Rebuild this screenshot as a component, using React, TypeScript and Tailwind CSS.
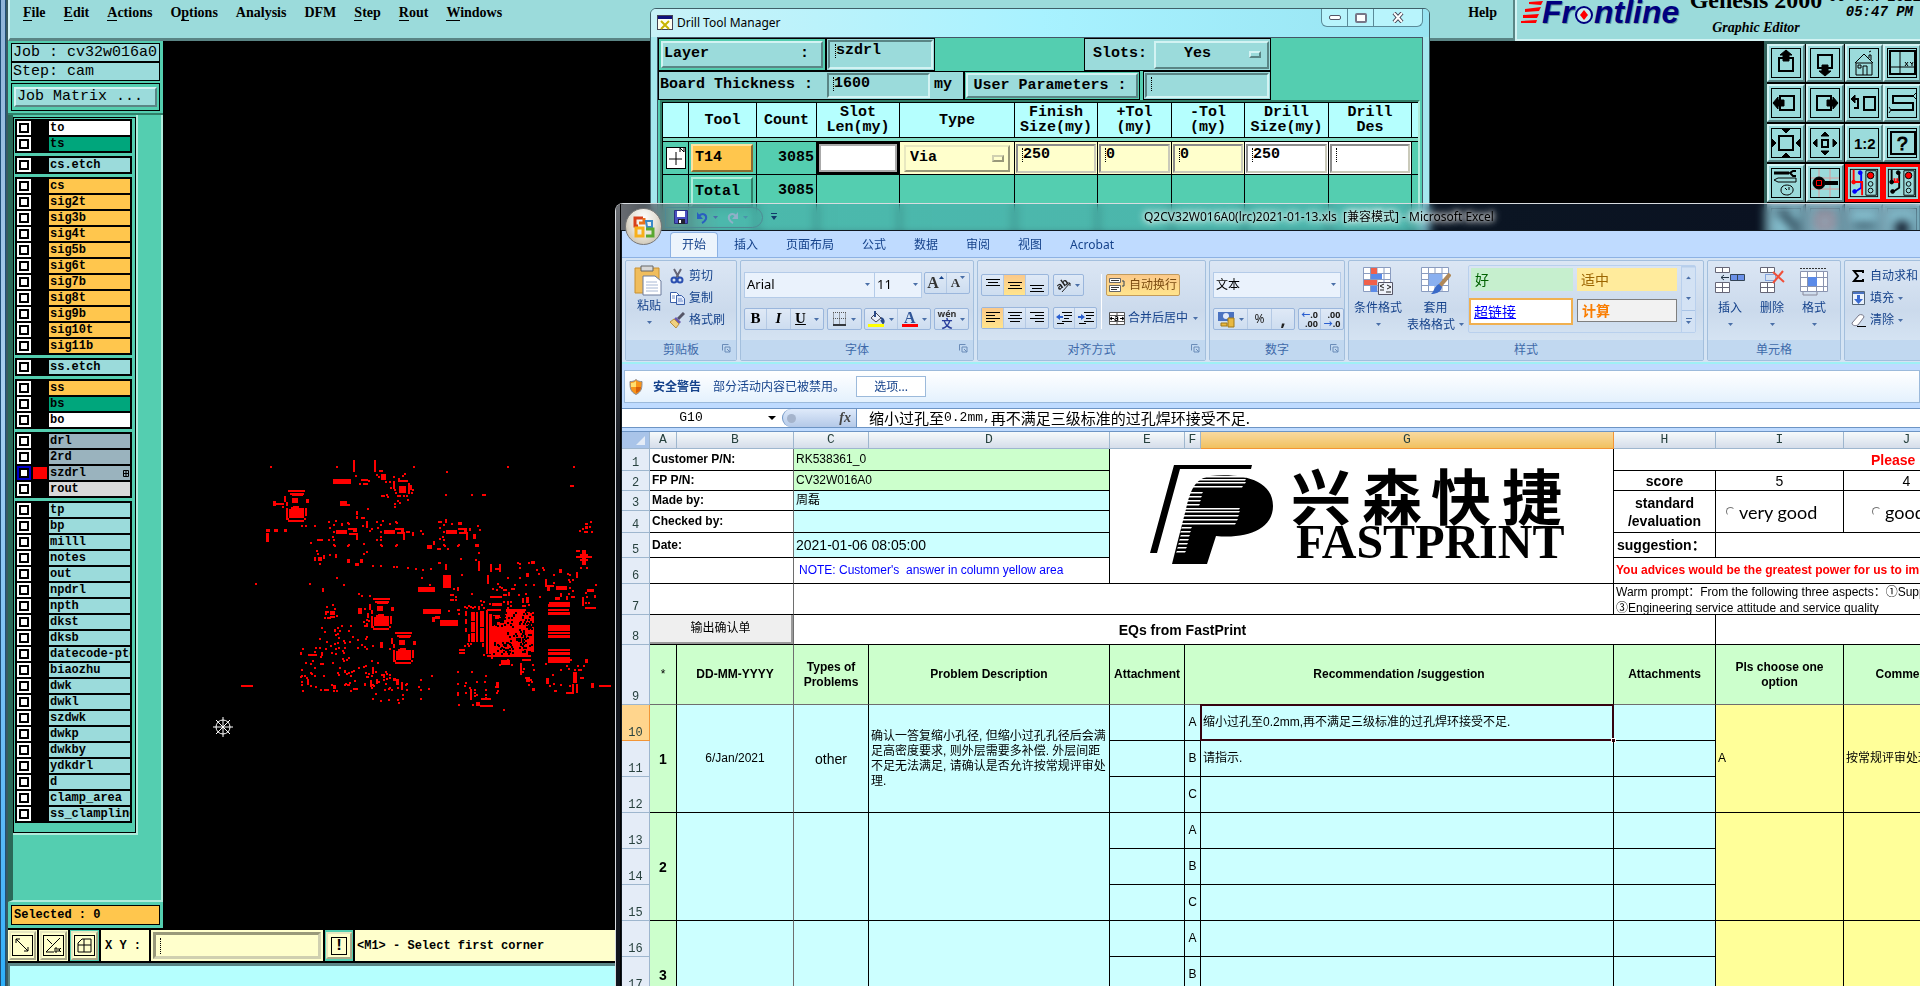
import { Fragment } from "react";
import type { ReactNode } from "react";

const CJK = "font-['Noto_Sans','Noto_Sans_CJK_SC',sans-serif]";
const MONO = "font-['Liberation_Mono','Noto_Sans_CJK_SC',monospace]";
const SHEET = "font-['Liberation_Sans','Noto_Sans_CJK_SC',sans-serif]";
const SERIF = "font-['Liberation_Serif',serif]";

const raised = "border-2 border-t-[#d3f3f3] border-l-[#d3f3f3] border-b-[#5a8585] border-r-[#5a8585] bg-[#9bdbdb]";
const sunken = "border-2 border-t-[#5a8585] border-l-[#5a8585] border-b-[#d3f3f3] border-r-[#d3f3f3]";
const sunkenPale = "border-3 border-t-[#99997a] border-l-[#99997a] border-b-[#d0d0b0] border-r-[#d0d0b0]";

type Layer = { name: string; color: string; on?: boolean };

const AQUA = "bg-[#9bdbdb]";
const GOLD = "bg-[#ffc64d]";
const STEEL = "bg-[#9ab3be]";

const aqua = (names: string[]): Layer[] => names.map(name => ({ name, color: AQUA }));
const gold = (names: string[]): Layer[] => names.map(name => ({ name, color: GOLD }));

const layerGroups: Layer[][] = [
  [{ name: "to", color: "bg-white" }, { name: "ts", color: "bg-[#00a67c]" }],
  aqua(["cs.etch"]),
  gold(["cs", "sig2t", "sig3b", "sig4t", "sig5b", "sig6t", "sig7b", "sig8t", "sig9b", "sig10t", "sig11b"]),
  aqua(["ss.etch"]),
  [{ name: "ss", color: GOLD }, { name: "bs", color: "bg-[#00a67c]" }, { name: "bo", color: "bg-white" }],
  [
    { name: "drl", color: STEEL },
    { name: "2rd", color: STEEL },
    { name: "szdrl", color: STEEL, on: true },
    { name: "rout", color: "bg-[#d9d9d9]" },
  ],
  aqua([
    "tp", "bp", "milll", "notes", "out", "npdrl", "npth", "dkst", "dksb", "datecode-pto",
    "biaozhu", "dwk", "dwkl", "szdwk", "dwkp", "dwkby", "ydkdrl", "d", "clamp_area", "ss_clampline",
  ]),
];

function LayerRow({ layer }: { layer: Layer }) {
  return (
    <label className="flex h-4 items-center border-y border-black pl-px">
      <input
        type="checkbox"
        className={`size-[14px] shrink-0 appearance-none bg-white outline-2 -outline-offset-4 ${layer.on ? "border-2 border-[#0000c8] outline-black" : "outline-black"}`}
      />
      <span className={`mx-[2px] h-3 w-[14px] shrink-0 ${layer.on ? "bg-[#ff0000]" : "bg-black"}`} />
      <span className={`relative h-[14px] w-[81px] overflow-hidden pl-px text-xs leading-[14px] font-bold whitespace-nowrap text-black ${layer.color}`}>
        {layer.name}
        {layer.on && (
          <svg className="absolute top-[4px] right-px" width="6" height="7" viewBox="0 0 6 7">
            <path d="M.5.5h5v6h-5zM3 .5v6M.5 3.5h5" fill="none" stroke="#000" />
          </svg>
        )}
      </span>
    </label>
  );
}

// Drill hits, in thirds of a screen pixel
const pads: number[][] = [
  [351, 24, 6, 36], [414, 24, 6, 36], [291, 81, 54, 15], [435, 66, 15, 18], [375, 81, 21, 6], [381, 93, 15, 6], [429, 54, 12, 6],
  [489, 102, 21, 21], [489, 84, 27, 6], [471, 87, 6, 24], [516, 93, 6, 33], [522, 99, 6, 15], [483, 129, 12, 6], [486, 78, 6, 12],
  [111, 147, 9, 15], [120, 153, 24, 6], [312, 147, 21, 15], [327, 156, 15, 6],
  [90, 243, 9, 27], [90, 231, 12, 9], [114, 231, 12, 9], [144, 231, 9, 9],
  [300, 234, 33, 12], [336, 228, 27, 6], [351, 228, 12, 12], [339, 243, 27, 6], [360, 243, 6, 21], [360, 177, 6, 12], [360, 192, 6, 9], [375, 195, 12, 6], [390, 207, 6, 21],
  [444, 234, 33, 12], [477, 228, 27, 6], [495, 228, 9, 15], [483, 240, 24, 6], [501, 240, 6, 24],
  [630, 234, 33, 12], [666, 228, 27, 6], [684, 228, 9, 12], [669, 240, 27, 6], [690, 240, 6, 24], [711, 246, 9, 15], [717, 276, 12, 9],
  [573, 279, 15, 12], [591, 267, 6, 12], [606, 207, 12, 6], [666, 210, 12, 9], [603, 288, 12, 6],
  [246, 315, 12, 12], [234, 315, 6, 12], [333, 321, 9, 12], [357, 333, 12, 9], [372, 321, 9, 12], [243, 261, 18, 6], [297, 306, 6, 12],
  [621, 369, 24, 39], [546, 405, 51, 15], [561, 471, 54, 15], [612, 504, 54, 18], [588, 495, 9, 15], [597, 492, 15, 9], [627, 336, 6, 18],
  [726, 327, 6, 30], [762, 336, 6, 24], [789, 336, 6, 24], [777, 348, 18, 6], [753, 369, 6, 27],
  [762, 432, 36, 6], [768, 453, 30, 9], [858, 438, 6, 15], [870, 435, 9, 18], [885, 327, 12, 9], [870, 363, 9, 12],
  [927, 381, 6, 24], [930, 399, 24, 6], [933, 405, 9, 12], [960, 402, 33, 12], [957, 435, 15, 9], [969, 351, 9, 12],
  [1020, 312, 48, 6], [1038, 294, 12, 45], [1032, 306, 24, 6], [1032, 321, 24, 6], [1020, 294, 12, 6], [1020, 360, 6, 18],
  [1053, 411, 21, 9], [1038, 435, 6, 27], [1047, 465, 33, 6], [1074, 429, 6, 9], [1047, 213, 9, 6], [1047, 222, 9, 9],
  [939, 450, 63, 6], [936, 456, 66, 9], [936, 471, 63, 6], [936, 480, 66, 9], [936, 519, 66, 18], [936, 540, 66, 6], [936, 549, 66, 9],
  [936, 591, 66, 6], [936, 600, 66, 9], [936, 615, 66, 18],
  [687, 477, 6, 15], [687, 501, 6, 15], [687, 528, 6, 12], [705, 480, 12, 27], [705, 510, 12, 30], [720, 480, 6, 90], [732, 477, 12, 48], [732, 528, 12, 42], [705, 543, 12, 27], [696, 546, 6, 24],
  [750, 474, 6, 132], [753, 471, 42, 6], [753, 609, 132, 6], [759, 486, 9, 120], [669, 591, 18, 6], [669, 600, 18, 6],
  [366, 468, 12, 18], [282, 477, 15, 12], [282, 492, 15, 6], [267, 477, 6, 12], [432, 570, 9, 18],
  [795, 624, 27, 15], [858, 621, 27, 6], [852, 633, 6, 36], [870, 675, 12, 15], [888, 708, 9, 9],
  [1011, 660, 12, 33], [1008, 696, 6, 27], [1020, 696, 6, 27], [1065, 693, 9, 15], [930, 678, 9, 18], [990, 720, 24, 6], [1047, 621, 9, 12],
  [720, 750, 12, 12], [735, 738, 30, 6], [732, 759, 39, 5], [780, 690, 9, 18], [702, 711, 6, 33], [663, 720, 6, 12],
  [402, 684, 6, 21], [420, 681, 6, 15], [408, 645, 6, 20], [480, 687, 9, 12], [495, 690, 6, 24], [264, 711, 15, 6], [291, 699, 9, 12], [351, 708, 15, 6], [216, 606, 27, 5],
  [15, 699, 36, 6], [1089, 699, 36, 6], [1002, 99, 12, 6], [738, 126, 12, 6], [324, 654, 6, 10], [384, 693, 6, 10],
];

const holes: number[][] = [
  [102, 42], [300, 42], [531, 42], [630, 57], [813, 42], [1011, 42], [627, 126], [705, 126], [357, 69], [369, 93], [396, 84], [420, 66], [426, 72],
  [471, 72], [498, 69], [504, 63], [447, 87], [459, 87], [462, 105], [474, 111], [477, 120], [528, 111], [525, 120], [435, 129], [441, 129], [450, 126], [453, 132], [513, 141],
  [501, 129], [510, 129], [483, 144], [489, 150], [474, 153], [474, 162], [393, 168], [378, 219], [399, 234], [405, 228], [195, 219], [207, 219], [234, 219],
  [276, 207], [297, 204], [291, 216], [315, 213], [315, 217], [333, 210], [336, 213], [279, 225], [291, 237], [288, 252], [276, 261], [291, 261], [291, 276], [294, 279], [336, 276], [333, 279], [381, 273],
  [420, 207], [438, 204], [432, 216], [459, 213], [477, 207], [480, 210], [423, 225], [432, 237], [432, 252], [420, 261], [432, 261], [432, 276], [435, 279], [480, 276], [477, 279],
  [627, 201], [627, 207], [621, 216], [645, 213], [609, 225], [621, 237], [618, 252], [609, 258], [621, 261], [621, 276], [624, 279], [666, 276], [663, 279], [633, 288], [699, 228], [699, 231], [723, 219], [729, 231],
  [510, 237], [516, 237], [528, 240], [528, 246], [552, 234], [558, 243], [222, 270], [240, 294], [243, 303], [261, 309], [261, 315], [249, 333], [279, 306], [381, 303], [390, 297], [408, 339], [432, 339], [471, 342], [480, 342], [513, 345], [537, 348], [558, 351], [582, 348],
  [606, 330], [609, 330], [672, 318], [717, 321], [726, 300], [675, 366], [555, 375], [300, 375], [57, 393], [219, 393], [321, 396], [258, 408], [258, 414], [366, 423], [375, 429], [399, 429], [579, 396],
  [651, 408], [663, 405], [663, 411], [642, 426], [648, 426], [657, 432], [642, 441], [648, 441], [657, 441], [705, 423], [636, 474], [663, 471], [666, 471], [666, 483], [732, 444], [741, 447],
  [813, 375], [849, 375], [849, 345], [843, 330], [849, 333], [876, 330], [900, 351], [918, 345], [921, 351], [906, 363], [783, 393], [768, 408], [780, 411], [789, 402], [795, 405], [801, 411], [807, 411], [825, 408], [831, 408], [834, 396], [867, 396], [891, 396], [801, 426], [807, 426], [816, 420], [816, 426], [846, 426], [867, 423], [909, 432],
  [951, 366], [951, 390], [993, 363], [999, 366], [996, 381], [999, 387], [1008, 381], [999, 405], [1008, 414], [996, 423], [1005, 432], [1011, 432], [990, 432], [990, 438], [972, 423], [972, 429], [1077, 396], [1029, 234], [1038, 228], [1044, 237], [1050, 237], [1065, 237], [1062, 207], [1059, 222], [1032, 345], [1050, 345], [1047, 420], [1050, 432], [1056, 450], [1047, 450],
  [684, 462], [690, 465], [696, 459], [702, 462], [708, 465], [714, 462], [726, 462], [726, 468], [735, 456], [741, 465], [759, 453], [801, 447], [813, 447], [813, 453], [822, 447], [822, 459], [813, 465], [858, 459], [864, 459], [876, 456],
  [684, 579], [693, 573], [696, 579], [702, 573], [738, 573], [738, 579], [741, 606], [765, 615], [789, 636], [825, 636], [813, 621], [861, 648], [858, 657], [888, 636], [891, 651], [867, 675], [882, 681], [885, 687], [876, 696], [927, 633], [888, 711],
  [663, 657], [663, 693], [705, 657], [747, 669], [720, 687], [744, 687], [684, 699], [687, 690], [699, 705], [714, 711], [714, 720], [720, 726], [687, 720], [747, 711], [747, 726], [777, 702], [783, 714], [780, 720], [708, 756], [666, 756], [714, 729], [801, 771], [747, 735],
  [585, 669], [552, 681], [546, 702], [552, 711], [576, 708], [552, 738], [417, 723], [408, 738], [432, 744], [456, 741], [483, 741], [498, 738], [486, 750], [498, 726],
  [948, 666], [951, 693], [939, 699], [954, 714], [957, 714], [972, 651], [972, 696], [990, 639], [996, 648], [1014, 651], [1026, 651], [1032, 651], [1023, 639], [1041, 639], [1032, 675], [1038, 675], [999, 699], [1002, 621],
];

// repeatable scatter for the via fields
function scatter(x: number, y: number, w: number, h: number, count: number, seed: number) {
  let s = seed;
  const next = () => (s = (s * 16807) % 2147483647) / 2147483647;
  return Array.from({ length: count }, () => [x + Math.floor((next() * w) / 3) * 3, y + Math.floor((next() * h) / 3) * 3]);
}

const viaField = [
  ...scatter(192, 585, 205, 132, 70, 77),
  ...scatter(250, 520, 165, 80, 34, 911),
  ...scatter(265, 450, 40, 70, 8, 5),
  ...scatter(380, 455, 26, 75, 8, 51),
  ...scatter(405, 605, 60, 110, 18, 313),
  ...scatter(440, 668, 75, 45, 16, 1021),
];

const toPath = (points: number[][]) => points.map(([x, y]) => `M${x} ${y}h6v6h-6z`).join("");
const toRects = (list: number[][]) => list.map(([x, y, w, h]) => `M${x} ${y}h${w}v${h}h-${w}z`).join("");

function Connector({ x, y }: { x: number; y: number }) {
  return (
    <path
      transform={`translate(${x} ${y})`}
      d="M6 0h51v6h-51zM12 9h42v5h-4v4h-34v-4h-4zM18 24h18v15h-18zM21 48h18v5h15v31h-46v-27h6v-5h7zM0 54h6v30h-6zM57 54h6v24h-6zM6 90h46v6h-46zM-6 18h6v18h-6zM0 36h6v12h-6zM60 26h8v14h-8zM0 84h8v6h-8zM54 84h6v6h-6zM-12 48h6v6h-6z"
    />
  );
}

function BoardView() {
  return (
    <svg className="block h-full w-full bg-black" role="img" aria-label="Board view">
      <g transform="translate(73 411) scale(.33333)" fill="#f00" shapeRendering="crispEdges">
        <path d={toRects(pads)} />
        <path d={toPath(holes)} />
        <path d={toPath(viaField)} />
        <Connector x={151} y={114} />
        <Connector x={406} y={438} />
        <Connector x={472} y={540} />
        <path d="M810 471h60v9h24v120h-18v9h-110v-84l15-9h22z" />
        <path d="M771 489h24v12h-24zM777 510h30v15h-30zM840 480h12v30h-12z" />
        <path fill="#000" d={toPath([...scatter(770, 477, 120, 48, 55, 19), ...scatter(846, 500, 42, 100, 45, 271), ...scatter(770, 570, 60, 36, 30, 83), ...scatter(812, 540, 60, 30, 16, 9)])} />
      </g>
      <g transform="translate(60 686)" stroke="#fff" fill="none">
        <circle r="7" />
        <path d="M-10 0h20M0-10v20M-7-7l14 14M7-7l-14 14" />
      </g>
    </svg>
  );
}

const menus: [string, string, string][] = [
  ["", "F", "ile"], ["", "E", "dit"], ["", "A", "ctions"], ["O", "p", "tions"], ["Analysis", "", ""],
  ["DFM", "", ""], ["", "S", "tep"], ["", "R", "out"], ["", "W", "indows"],
];

function GenesisMenu() {
  return (
    <header className={`flex h-[41px] shrink-0 overflow-hidden bg-[#9bdbdb] ${SERIF}`}>
      <nav className="flex flex-1 items-start gap-[18px] border-2 border-t-0 border-b-3 border-t-[#d3f3f3] border-l-[#d3f3f3] border-r-[#5a8585] border-b-[#5a8585] pt-1 pl-[13px] text-sm font-bold">
        {menus.map(([pre, key, post]) => (
          <button key={pre + key + post} type="button" className="h-[18px] leading-[18px]">
            {pre}
            <span className="border-b border-black">{key}</span>
            {post}
          </button>
        ))}
        <button type="button" className="mr-4 ml-auto h-[18px] leading-[18px]">Help</button>
      </nav>
      <div className="flex w-[405px] border-b-2 border-l-2 border-[#d3f3f3] pl-1">
        <svg width="162" height="32" viewBox="0 0 162 32" className="shrink-0" role="img" aria-label="Frontline">
          <path d="M8 2l14-1-2 4-12-1zM4 9l16-2-2 4-14 1zM2 15l16-1-2 4H2zM0 21l16-1-1 3H0z" fill="#f00" />
          <g className="font-['Liberation_Sans',sans-serif]" fontSize="32" fontWeight="bold" fontStyle="italic">
            <text x="22" y="24" fill="#6d9a9c">Fr</text>
            <text x="74" y="24" fill="#6d9a9c">ntline</text>
            <text x="21" y="23" fill="#00007f">Fr</text>
            <text x="73" y="23" fill="#00007f">ntline</text>
          </g>
          <circle cx="63" cy="15" r="8" fill="#c9eeee" stroke="#00007f" strokeWidth="2" />
          <path d="M63 10l4 5-4 5-4-5z" fill="#f00" />
        </svg>
        <div className="flex w-[146px] shrink-0 flex-col items-center">
          <span className="-mt-3 text-2xl leading-6 font-bold whitespace-nowrap">Genesis 2000</span>
          <span className="pt-2 text-sm leading-[16px] font-bold italic">Graphic Editor</span>
        </div>
        <div className={`-mt-[10px] w-[92px] shrink-0 text-right text-sm leading-[15px] font-bold whitespace-nowrap italic ${MONO}`}>
          <p>06 Jan 2021</p>
          <p className="pr-2">05:47 PM</p>
        </div>
      </div>
    </header>
  );
}

function LayerPanel() {
  return (
    <aside className={`flex w-[155px] shrink-0 flex-col bg-[#54ceb0] ${MONO}`}>
      <div className="flex flex-col border-b-2 border-[#2f7f68] px-[3px] py-[2px]">
        <p className="border border-black bg-[#9bdbdb] pl-px text-[15px] leading-[17px] whitespace-nowrap">Job : cv32w016a0</p>
        <p className="border border-black bg-[#9bdbdb] pl-px text-[15px] leading-[17px] whitespace-nowrap">Step: cam</p>
        <div className="mt-[2px] border border-black px-[2px] py-[3px]">
          <button type="button" className={`block h-5 w-full pl-px text-left text-[15px] leading-4 ${raised}`}>Job Matrix ...</button>
        </div>
      </div>
      <div className="flex-1 border-r-2 border-b-2 border-l-5 border-r-[#b0ecdc] border-b-[#b0ecdc] border-l-[#2a6a58]">
        <div className="w-[125px] border-r-2 border-b-2 border-[#b0ecdc] pt-[2px]">
          <div className="flex flex-col gap-[3px] border border-black px-px pt-px pb-[9px]">
            {layerGroups.map((group, i) => (
              <div key={i} className="w-[117px] border border-black bg-black">
                {group.map(layer => <LayerRow key={layer.name} layer={layer} />)}
              </div>
            ))}
          </div>
        </div>
      </div>
      <p className="m-[3px] border border-black bg-[#ffc64d] pl-[2px] text-xs leading-[18px] font-bold">Selected : 0</p>
    </aside>
  );
}

function ToolButton({ label, hot, children }: { label: string; hot?: boolean; children: ReactNode }) {
  return (
    <button type="button" aria-label={label} className={`size-[38px] ${hot ? "border-3 border-[#f00] bg-[#9bdbdb]" : raised}`}>
      <svg viewBox="2 2 34 34" className="block h-full w-full" fill="none" stroke="#000">
        <rect x="4.5" y="4.5" width="29" height="29" />
        {children}
      </svg>
    </button>
  );
}

function ViewTools() {
  return (
    <div className="grid w-[156px] shrink-0 grid-cols-4 content-start gap-[2px] overflow-hidden border-t-3 border-l-3 border-[#2f5f58] bg-black">
      <ToolButton label="Pan up"><path d="M12 14h14v13h-14z" strokeWidth="2" /><path d="M19 6l6 5h-3v6h-6v-6h-3z" fill="#000" /></ToolButton>
      <ToolButton label="Pan down"><path d="M12 11h14v13h-14z" strokeWidth="2" /><path d="M19 32l6-5h-3v-6h-6v6h-3z" fill="#000" /></ToolButton>
      <ToolButton label="Home"><path d="M10 19l9-9 9 9M11 19h16v12h-16zM18 31v-9h4v9M13 21h3v3h-3zM24 14v-3h2v5M24 8l2-1" /></ToolButton>
      <ToolButton label="Coordinates"><path d="M7 7h25v23h-25z" strokeWidth="2" /><path d="M17 7v23M7 23h25M22 18l3 4m0-4l-3 4M27 18l2 2 1-2M29 20v2" /></ToolButton>
      <ToolButton label="Pan left"><path d="M13 12h14v14h-14z" strokeWidth="2" /><path d="M6 19l5-6v3h6v6h-6v3z" fill="#000" /></ToolButton>
      <ToolButton label="Pan right"><path d="M11 12h14v14h-14z" strokeWidth="2" /><path d="M32 19l-5-6v3h-6v6h6v3z" fill="#000" /></ToolButton>
      <ToolButton label="Previous view"><path d="M19 13h11v13h-11zM8 15h5v9h-4" strokeWidth="2" /><path d="M6 15l4-4v8z" fill="#000" /></ToolButton>
      <ToolButton label="Serpentine"><path d="M30 12h-20v7h20v7h-22" strokeWidth="2" /><path d="M33 9l-3 3 3 3M6 23l2 3-2 3" /></ToolButton>
      <ToolButton label="Zoom in"><path d="M12 12h14v14h-14z" strokeWidth="2" /><path d="M15 5h8l-4 4zM15 33h8l-4-4zM5 15v8l4-4zM33 15v8l-4-4z" fill="#000" /></ToolButton>
      <ToolButton label="Zoom out"><path d="M16 16h6v7h-6z" strokeWidth="2" /><path d="M15 12h8l-4-4zM15 27h8l-4 4zM11 15v8l-4-4zM27 15v8l4-4z" fill="#000" /></ToolButton>
      <ToolButton label="Scale one to two"><text x="9" y="25" className="font-['Liberation_Sans',sans-serif]" fontSize="15" fontWeight="bold" fill="#000" stroke="none">1:2</text></ToolButton>
      <ToolButton label="Query"><path d="M8 8h24v22h-24z" strokeWidth="2" /><text x="14" y="26" className="font-['Liberation_Sans',sans-serif]" fontSize="19" fill="#000">?</text></ToolButton>
      <ToolButton label="Tools"><path d="M7 9h15" strokeWidth="3" /><path d="M29 7h-3l-3 2 3 3h3" strokeWidth="2" /><path d="M7 16l4-2h18v4h-18zM14 26c0-5 6-6 10-4 4 3 2 8-3 9-4 0-7-1-7-5zM18 24l2 2M22 23v3" /></ToolButton>
      <ToolButton label="Snap"><path d="M13 5v28M24 5v28M5 14h28M5 25h28" stroke="#d99a9a" /><path d="M19 19h13" strokeWidth="4" /><circle cx="13" cy="19" r="6" fill="#000" /><path d="M10.500 16.500h5v5h-5z" stroke="#f00" /></ToolButton>
      <ToolButton label="Rule check" hot><path d="M16 8v16l-6 4" stroke="#00f" strokeWidth="2" /><path d="M8 5v13h9v14" stroke="#f00" strokeWidth="2" /><circle cx="8" cy="18" r="2" fill="#f00" stroke="#f00" /><circle cx="15" cy="8" r="2" fill="#00f" stroke="#00f" /><circle cx="9" cy="28" r="2" fill="#00f" stroke="#00f" /><path d="M21 6h11v26h-11z" /><circle cx="26" cy="11" r="3.500" fill="#f00" /><circle cx="26" cy="20" r="2.500" /><circle cx="26" cy="27" r="2.500" /></ToolButton>
      <ToolButton label="Net check" hot><path d="M16 8v16l-6 4M8 5v13" strokeWidth="2" /><path d="M8 18h8M11 14v4M14 14v4" stroke="#f00" strokeWidth="2" /><circle cx="8" cy="18" r="2" fill="#000" /><circle cx="15" cy="8" r="2" fill="#000" /><circle cx="9" cy="28" r="2" fill="#000" /><path d="M21 6h11v26h-11z" /><circle cx="26" cy="11" r="3.500" fill="#f00" /><circle cx="26" cy="20" r="2.500" /><circle cx="26" cy="27" r="2.500" /></ToolButton>
      <ToolButton label="Move"><path d="M10 10h10v8h8v14" strokeWidth="4" /></ToolButton>
      <ToolButton label="Select"><path d="M12 10h14v14h-14z" stroke="#c44" strokeWidth="3" /></ToolButton>
      <ToolButton label="Line"><path d="M8 22h22" strokeWidth="4" /></ToolButton>
      <ToolButton label="Pad"><circle cx="19" cy="24" r="7" fill="#000" /></ToolButton>
    </div>
  );
}

function PaleTool({ label, children }: { label: string; children: ReactNode }) {
  return (
    <button type="button" aria-label={label} className="flex h-[29px] w-[27px] items-center justify-center border-2 border-t-[#e8e8c0] border-l-[#e8e8c0] border-r-[#a9a98a] border-b-[#a9a98a] bg-[#ffffcc]">
      <svg width="21" height="21" fill="none" stroke="#000">
        <rect x=".5" y=".5" width="20" height="20" />
        {children}
      </svg>
    </button>
  );
}

function CommandBar() {
  return (
    <footer className={`flex flex-col text-xs font-bold ${MONO}`}>
      <div className="flex h-[35px] items-stretch gap-[2px] border-y-2 border-black bg-black">
        <div className="flex items-center bg-[#ffffcc] px-px"><PaleTool label="Zoom window"><path d="M4 4l12 12M4 8v-4h4M16 12v4h-4" /></PaleTool></div>
        <div className="flex items-center bg-[#ffffcc] px-px"><PaleTool label="Angle"><path d="M3 17l14-14M3 17h8M4 4l5 5M12 13h2v4h-2zM16 13v4M18 13l-2 2 2 2" /></PaleTool></div>
        <div className="flex items-center bg-[#54ceb0] px-px"><PaleTool label="Grid"><path d="M4 17v-9l4-4h9v13zM10 4v13M4 10h13" /></PaleTool></div>
        <div className="flex items-center bg-[#ffffcc] pr-2 pl-1">
          <label htmlFor="xy" className="whitespace-pre">X Y :</label>
        </div>
        <div className="flex bg-[#ffffcc] p-[2px]">
          <div className={`flex w-[168px] items-center pl-1 ${sunkenPale}`}>
            <span className="h-4 border-l border-dotted border-black" />
            <input id="xy" className="w-full bg-transparent pl-px outline-none" />
          </div>
        </div>
        <div className="flex items-center bg-[#54ceb0] px-px">
          <button type="button" aria-label="Alert" className="flex h-[27px] w-[26px] items-center justify-center border-2 border-t-[#e8e8c0] border-l-[#e8e8c0] border-r-[#a9a98a] border-b-[#a9a98a] bg-[#ffffcc]">
            <span className="flex h-[18px] w-4 items-center justify-center border border-black text-base">!</span>
          </button>
        </div>
        <p className="flex flex-1 items-center bg-[#ffffcc] pl-[2px]">&lt;M1&gt; - Select first corner</p>
      </div>
      <div className="h-[23px] border-t-3 border-l-2 border-[#5a8585] bg-[#b5fffe]" />
    </footer>
  );
}

function Caret() {
  return <span className="mt-[2px] h-[14px] shrink-0 border-l border-dotted border-black" />;
}

function DrillInput({ label, value, tone }: { label: string; value: string; tone: string }) {
  return (
    <div className={`m-px flex h-[29px] border-2 border-t-[#8c8c8c] border-l-[#8c8c8c] border-r-[#cacaba] border-b-[#cacaba] pl-1 ${tone}`}>
      <Caret />
      <input aria-label={label} defaultValue={value} className="h-5 w-full min-w-0 bg-transparent text-[15px] font-bold outline-none" />
    </div>
  );
}

const drillHeads: { label: string; w: string }[] = [
  { label: "", w: "w-[26px]" }, { label: "Tool", w: "w-[68px]" }, { label: "Count", w: "w-[60px]" },
  { label: "Slot\nLen(my)", w: "w-[83px]" }, { label: "Type", w: "w-[115px]" }, { label: "Finish\nSize(my)", w: "w-[83px]" },
  { label: "+Tol\n(my)", w: "w-[74px]" }, { label: "-Tol\n(my)", w: "w-[73px]" }, { label: "Drill\nSize(my)", w: "w-[84px]" },
  { label: "Drill\nDes", w: "w-[83px]" }, { label: "S\nS", w: "w-[60px]" },
];

function DrillWindow() {
  return (
    <section className={`absolute top-[8px] left-[650px] w-[780px] overflow-hidden rounded-t-md border border-[#3f5f68] bg-[#a5e8ee] px-[6px] ${MONO}`}>
      <header className="-mx-[6px] flex h-7 items-start bg-linear-to-r from-[#c8f2f8] via-[#a8f2ff] to-[#98e4f2] pl-[6px]">
        <svg width="16" height="16" className="mt-[6px]" role="img" aria-label="X">
          <rect x=".5" y=".5" width="15" height="14" fill="#fffff0" stroke="#445" />
          <path d="M1 1h14v3h-14z" fill="#10107c" />
          <path d="M4 6l8 8M12 6l-8 8" stroke="#c8b400" strokeWidth="2" />
        </svg>
        <h2 className="pt-[5px] pl-1 font-['Noto_Sans',sans-serif] text-xs leading-[18px]">Drill Tool Manager</h2>
        <div className="mr-[6px] ml-auto flex h-[18px] w-[102px] divide-x divide-[#5a8a98] rounded-b-md border border-t-0 border-[#5a8a98] bg-[#b8f4fc]">
          <button type="button" aria-label="Minimize" className="flex flex-1 items-center justify-center"><span className="h-[5px] w-3 rounded-xs border border-[#556] bg-white" /></button>
          <button type="button" aria-label="Maximize" className="flex flex-1 items-center justify-center"><span className="h-[10px] w-3 rounded-xs border-2 border-[#778] bg-white" /></button>
          <button type="button" aria-label="Close" className="flex w-12 items-center justify-center">
            <svg width="12" height="11"><path d="M2 1l8 9M10 1l-8 9" stroke="#445" strokeWidth="4" /><path d="M2 1l8 9M10 1l-8 9" stroke="#fff" strokeWidth="2" /></svg>
          </button>
        </div>
      </header>
      <div className="border border-[#456] bg-[#54ceb0] text-[15px] font-bold">
        <div className="flex h-[33px] items-stretch">
          <div className="w-[168px] border border-black p-[2px]">
            <button type="button" className={`flex h-full w-full items-center justify-between pr-3 pl-px ${raised}`}><span>Layer</span><span>:</span></button>
          </div>
          <div className="w-[109px] border border-black bg-[#9bdbdb] p-px">
            <div className={`flex h-full pl-[5px] ${sunken}`}>
              <Caret />
              <input aria-label="Layer" defaultValue="szdrl" className="h-[18px] w-full min-w-0 outline-none" />
            </div>
          </div>
          <div className="ml-[149px] flex w-[187px] items-center border border-black bg-[#9bdbdb] pl-2">
            <label htmlFor="slots" className="flex-1">Slots:</label>
            <div className="relative m-px w-[115px]">
              <select id="slots" className={`h-7 w-full appearance-none pl-7 ${raised}`}><option>Yes</option></select>
              <span className={`pointer-events-none absolute top-[10px] right-2 h-[7px] w-3 ${raised}`} />
            </div>
          </div>
        </div>
        <div className="flex h-[29px]">
          <div className="flex w-[306px] items-center border border-black bg-[#9bdbdb] pl-px">
            <label htmlFor="thick" className="w-[167px] whitespace-nowrap">Board Thickness :</label>
            <div className={`flex h-[25px] w-[103px] pl-1 ${sunken}`}>
              <Caret />
              <input id="thick" defaultValue="1600" className="h-[18px] w-full min-w-0 outline-none" />
            </div>
            <span className="pl-1">my</span>
          </div>
          <div className="w-[176px] border border-black p-px">
            <button type="button" className={`h-full w-full pr-1 leading-5 ${raised}`}>User Parameters :</button>
          </div>
          <div className="ml-[3px] w-[128px] border border-black bg-[#9bdbdb] p-px">
            <div className={`flex h-full pl-1 ${sunken}`}>
              <Caret />
              <input aria-label="User Parameters" className="w-full min-w-0 outline-none" />
            </div>
          </div>
        </div>
        <div className="mr-[2px] ml-[2px] overflow-hidden border-t-2 border-r-2 border-l-2 border-t-[#2f7f68] border-r-[#b0ecdc] border-l-[#2f7f68]">
          <table className="w-[810px] table-fixed border-separate border-spacing-0 border-l border-black">
            <thead>
              <tr className="h-[36px] bg-[#b5fffe]">
                {drillHeads.map(h => (
                  <th key={h.label} className={`border-t border-r border-b border-black p-0 leading-[15px] font-bold whitespace-pre ${h.w}`}>{h.label}</th>
                ))}
              </tr>
            </thead>
            <tbody>
              <tr><td colSpan={11} className="h-[3px] bg-[#7fdcc5] p-0" /></tr>
              <tr className="h-8 [&>td]:border-t [&>td]:border-r [&>td]:border-b [&>td]:border-black [&>td]:p-0">
                <td>
                  <svg width="20" height="22" className="mx-auto block"><rect x=".5" y=".5" width="19" height="21" fill="#fff" stroke="#000" /><path d="M10 5v13M3 12h13M14 5v-4l4 4v-4" stroke="#000" fill="none" /></svg>
                </td>
                <td><button type="button" className="m-[2px] h-7 w-[62px] border-2 border-t-[#ffe2a0] border-l-[#ffe2a0] border-r-[#8a6a30] border-b-[#8a6a30] bg-[#ffc64d] pl-[2px] text-left">T14</button></td>
                <td className="text-right"><span className="pr-[2px]">3085</span></td>
                <td className="bg-black"><input aria-label="Slot length" className="m-[2px] h-7 w-[78px] border-2 border-[#aaa] bg-white outline-none" /></td>
                <td className="bg-[#ffffcc]">
                  <div className="relative mx-1">
                    <select aria-label="Type" className="h-[27px] w-full appearance-none border-2 border-t-[#e8e8c0] border-l-[#e8e8c0] border-r-[#99997a] border-b-[#99997a] bg-[#ffffcc] pl-1"><option>Via</option></select>
                    <span className="pointer-events-none absolute top-[10px] right-[6px] h-[7px] w-3 border-2 border-r-[#99997a] border-b-[#99997a] border-t-[#d0d0b0] border-l-[#d0d0b0]" />
                  </div>
                </td>
                <td className="bg-[#ffffcc]"><DrillInput label="Finish size" value="250" tone="bg-[#ffffcc]" /></td>
                <td className="bg-[#ffffcc]"><DrillInput label="Plus tolerance" value="0" tone="bg-[#ffffcc]" /></td>
                <td className="bg-[#ffffcc]"><DrillInput label="Minus tolerance" value="0" tone="bg-[#ffffcc]" /></td>
                <td className="bg-white"><DrillInput label="Drill size" value="250" tone="bg-white" /></td>
                <td className="bg-white"><DrillInput label="Drill designation" value="" tone="bg-white" /></td>
                <td />
              </tr>
              <tr className="h-[60px] align-top [&>td]:border-r [&>td]:border-black [&>td]:p-0">
                <td />
                <td><button type="button" className="m-[2px] h-[30px] w-[62px] border-2 border-t-[#b0ecdc] border-l-[#b0ecdc] border-r-[#2f7f68] border-b-[#2f7f68] pl-[2px] text-left">Total</button></td>
                <td className="text-right leading-8"><span className="pr-[2px]">3085</span></td>
                <td /><td /><td /><td /><td /><td /><td /><td />
              </tr>
            </tbody>
          </table>
        </div>
      </div>
    </section>
  );
}

/* ---------- spreadsheet window ---------- */

function Down({ dark }: { dark?: boolean }) {
  return <svg width="5" height="3" className="shrink-0"><path d="M0 0h5l-2.500 3z" fill={dark ? "#000" : "#4a6fa8"} /></svg>;
}

const toolBox = "flex h-[22px] items-stretch divide-x divide-[#b4c9e4] rounded-xs border border-[#9ab6dc] bg-linear-to-b from-[#dfe9f6] to-[#cdddf0]";
const hotFill = "bg-linear-to-b from-[#fbc98a] to-[#ffe48c]";

function Tool({ label, w = "w-[22px]", hot, children }: { label: string; w?: string; hot?: boolean; children: ReactNode }) {
  return (
    <button type="button" aria-label={label} className={`flex items-center justify-center gap-1 ${w} ${hot ? hotFill : ""}`}>
      {children}
    </button>
  );
}

function Lines({ d }: { d: string }) {
  return <svg width="14" height="14"><path d={d} stroke="#000" strokeWidth="1" shapeRendering="crispEdges" /></svg>;
}

function Group({ title, w, launcher, children }: { title: string; w: string; launcher?: boolean; children: ReactNode }) {
  return (
    <section className={`flex h-[101px] shrink-0 flex-col overflow-hidden rounded-xs border border-[#a3bfdd] bg-linear-to-b from-[#dbe6f4] via-[#cbdaec] to-[#dbe9f6] ${w}`}>
      <div className="flex-1">{children}</div>
      <footer className="relative h-5 bg-[#c1d8f0] text-center text-xs leading-5 text-[#3e6aaa]">
        {title}
        {launcher && (
          <svg className="absolute top-1 right-[5px]" width="9" height="9" fill="none" stroke="#6a8cb8"><path d="M.5 6.500v-6h6M3 3h5v5h-5zM5 5l3 3" /></svg>
        )}
      </footer>
    </section>
  );
}

function RowAction({ label, arrow, children }: { label: string; arrow?: boolean; children: ReactNode }) {
  return (
    <button type="button" className="flex h-[22px] items-center gap-1 whitespace-nowrap">
      <svg width="15" height="16" fill="none">{children}</svg>
      {label}
      {arrow && <Down />}
    </button>
  );
}

function BigAction({ lines, children, sideArrow }: { lines: string[]; children: ReactNode; sideArrow?: boolean }) {
  return (
    <button type="button" className="flex flex-col items-center whitespace-nowrap">
      <svg width="30" height="32" viewBox="0 0 30 32" fill="none">{children}</svg>
      {lines.map((line, i) => (
        <span key={line} className="flex h-[17px] items-center gap-1 leading-[17px]">
          {line}
          {sideArrow && i === lines.length - 1 && <Down />}
        </span>
      ))}
      {!sideArrow && <span className="pt-[7px]"><Down /></span>}
    </button>
  );
}

const grid4 = "M.5.5h27v24h-27zM7.500.5v24M14 .5v24M21 .5v24M.5 6.500h27M.5 12.500h27M.5 18.500h27";

function Ribbon() {
  return (
    <div className="flex h-[107px] gap-[3px] overflow-hidden border-t border-b-2 border-t-[#8db2e3] border-b-[#9ff0f5] bg-[#d5e4f4] px-[3px] pt-[2px] text-xs text-[#15428b]">
      <Group title="剪贴板" w="w-28" launcher>
        <div className="flex gap-[6px] pt-1 pl-2">
          <BigAction lines={["粘贴"]}>
            <path d="M1 3h24v25h-24z" fill="#f0bd5c" stroke="#c89030" />
            <path d="M7 1h12v5h-12z" fill="#d8d8d8" stroke="#666" />
            <path d="M9 11h12l6 5v14h-18z" fill="#fff" stroke="#6a7a9c" />
            <path d="M12 17h11M12 20h12M12 23h12M12 26h12" stroke="#a8b8d4" />
          </BigAction>
          <div className="flex flex-col">
            <RowAction label="剪切"><path d="M4 1l5 9M11 1l-5 9" stroke="#667" strokeWidth="2" /><circle cx="4" cy="12" r="2.500" stroke="#2a4fb0" strokeWidth="2" /><circle cx="10" cy="12" r="2.500" stroke="#2a4fb0" strokeWidth="2" /></RowAction>
            <RowAction label="复制"><path d="M.5 2.500h6l3 3v7h-9z" fill="#fff" stroke="#3a5fa8" /><path d="M6.500 5.500h5l3 3v6h-8z" fill="#dfe8fa" stroke="#3a5fa8" /><path d="M8 9h4M8 11h5M2 6h3M2 8h3" stroke="#6a8ac8" /></RowAction>
            <RowAction label="格式刷"><path d="M14 1l-6 6" stroke="#556" strokeWidth="3" /><path d="M6 5l5 5-2 2-5-5z" fill="#6a5ab0" /><path d="M4 7l5 5-3 4-6-6z" fill="#f0d080" stroke="#b89040" /></RowAction>
          </div>
        </div>
      </Group>
      <Group title="字体" w="w-[234px]" launcher>
        <div className="flex flex-col gap-[10px] px-[3px] pt-[11px]">
          <div className="flex">
            <div className="relative">
              <select aria-label="Font" className="h-[26px] w-[131px] appearance-none border border-[#b4cbe8] bg-[#eaf2fc] pl-[2px] text-[13px] text-black"><option>Arial</option></select>
              <span className="pointer-events-none absolute top-[11px] right-[5px]"><Down /></span>
            </div>
            <div className="relative">
              <select aria-label="Size" className="h-[26px] w-[47px] appearance-none border border-l-0 border-[#b4cbe8] bg-[#eaf2fc] pl-[2px] text-[13px] text-black"><option>11</option></select>
              <span className="pointer-events-none absolute top-[11px] right-1"><Down /></span>
            </div>
            <div className={`ml-[2px] ${toolBox} ${SERIF} font-bold text-[#333]`}>
              <Tool label="Grow font"><span className="text-base">A</span><svg width="5" height="3" className="-mt-3 -ml-1"><path d="M0 3h5l-2.500-3z" fill="#15428b" /></svg></Tool>
              <Tool label="Shrink font"><span className="text-[13px]">A</span><span className="-mt-3 -ml-1"><Down /></span></Tool>
            </div>
          </div>
          <div className="flex justify-between pr-[1px]">
            <div className={`${toolBox} ${SERIF} text-[15px] text-black`}>
              <Tool label="Bold"><b>B</b></Tool>
              <Tool label="Italic" w="w-6"><b><i>I</i></b></Tool>
              <Tool label="Underline" w="w-8"><b><u>U</u></b><span className="ml-1"><Down /></span></Tool>
            </div>
            <div className={toolBox}>
              <Tool label="Borders" w="w-[33px]">
                <svg width="15" height="14"><path d="M1.500.5v12M7.500.5v12M13.500.5v12M1 .5h13M1 6.500h13" stroke="#555" strokeDasharray="1 1" /><path d="M1 13h13" stroke="#000" strokeWidth="1.500" /></svg><Down />
              </Tool>
            </div>
            <div className={toolBox}>
              <Tool label="Fill color" w="w-[33px]"><svg width="17" height="17" fill="none"><path d="M3 7l5-5 5 5-5 4z" fill="#e8eef8" stroke="#445" /><path d="M7 0v6M13 7c3 1 3 4 2 5l-2-3" stroke="#2a4a88" strokeWidth="2" /><path d="M0 13h16v3h-16z" fill="#ff0" /></svg><Down /></Tool>
              <Tool label="Font color" w="w-[32px]"><span className={`flex w-4 flex-col items-center border-b-3 border-[#f00] text-base leading-[13px] font-bold text-[#2f5597] ${SERIF}`}>A</span><Down /></Tool>
            </div>
            <div className={toolBox}>
              <Tool label="Phonetic" w="w-[33px]"><span className="flex flex-col items-center text-[9px] leading-[8px] font-bold text-[#333]">wén<span className="text-[11px] leading-[11px] text-[#2a3f9c]">文</span></span><Down /></Tool>
            </div>
          </div>
        </div>
      </Group>
      <Group title="对齐方式" w="w-[229px]" launcher>
        <div className="flex gap-1 pt-[13px] pl-[3px]">
          <div className="flex flex-col gap-[11px]">
            <div className={toolBox}>
              <Tool label="Top align"><Lines d="M0 1.500h14M2 4.500h10M0 7.500h14" /></Tool>
              <Tool label="Middle align" hot><Lines d="M0 4.500h14M2 7.500h10M0 10.500h14" /></Tool>
              <Tool label="Bottom align"><Lines d="M0 7.500h14M2 10.500h10M0 13.500h14" /></Tool>
            </div>
            <div className={toolBox}>
              <Tool label="Align left" hot><Lines d="M0 1.500h14M0 4.500h9M0 7.500h14M0 10.500h9" /></Tool>
              <Tool label="Center"><Lines d="M0 1.500h14M2 4.500h10M0 7.500h14M2 10.500h10" /></Tool>
              <Tool label="Align right"><Lines d="M0 1.500h14M5 4.500h9M0 7.500h14M5 10.500h9" /></Tool>
            </div>
          </div>
          <div className="flex flex-col items-start gap-[11px]">
            <div className={toolBox}>
              <Tool label="Orientation" w="w-[29px]"><svg width="14" height="16" fill="none" stroke="#222"><text x="0" y="11" fontSize="10" fontWeight="bold" fill="#222" stroke="none" transform="rotate(-35 5 9)">ab</text><path d="M5 15l8-9M10 6h3v3" /></svg><Down /></Tool>
            </div>
            <div className={toolBox}>
              <Tool label="Decrease indent" w="w-[21px]"><svg width="16" height="14"><path d="M6 1.500h10M8 4.500h8M8 7.500h5M6 10.500h10M1 12.500h7" stroke="#000" /><path d="M0 6l4-3v2h3v2h-3v2z" fill="#2a5fd0" /></svg></Tool>
              <Tool label="Increase indent" w="w-[21px]"><svg width="16" height="14"><path d="M6 1.500h10M8 4.500h8M8 7.500h5M6 10.500h10M1 12.500h7" stroke="#000" /><path d="M7 6l-4-3v2h-3v2h3v2z" fill="#2a5fd0" /></svg></Tool>
            </div>
          </div>
          <div className="flex flex-col items-start gap-[11px] border-l border-white pl-1">
            <button type="button" className={`flex h-[22px] items-center gap-1 rounded-xs border border-[#c29b5c] px-[2px] text-[#7a4a10] ${hotFill}`}>
              <svg width="16" height="16" fill="none"><path d="M.5 1.500h11v4h-11zM.5 8.500h11v6h-11z" fill="#fff" stroke="#666" /><path d="M2 3.500h8M2 10.500h8M2 12.500h6" stroke="#333" /><path d="M13 4h2v5h-2" stroke="#345" /></svg>
              自动换行
            </button>
            <button type="button" className="flex h-[22px] items-center gap-[3px] px-[3px]">
              <svg width="16" height="15" fill="none"><path d="M.5 1.500h15v12h-15zM.5 4.500h15M.5 10.500h15M8 1.500v3M8 10.500v3" fill="#fff" stroke="#555" /><path d="M1 7.500h4M15 7.500h-4M3 6l-2 1.500 2 1.500M13 6l2 1.500-2 1.500" stroke="#000" /><text x="5" y="10" fontSize="8" fontWeight="bold" fill="#000">a</text></svg>
              合并后居中<span className="ml-[2px]"><Down /></span>
            </button>
          </div>
        </div>
      </Group>
      <Group title="数字" w="w-[136px]" launcher>
        <div className="flex flex-col gap-[10px] pt-[11px] pl-[3px]">
          <div className="relative w-32">
            <select aria-label="Number format" className="h-[26px] w-full appearance-none border border-[#b4cbe8] bg-[#eaf2fc] pl-[2px] text-xs text-black"><option>文本</option></select>
            <span className="pointer-events-none absolute top-[11px] right-[5px]"><Down /></span>
          </div>
          <div className="flex gap-[3px] text-[#222]">
            <div className={toolBox}>
              <Tool label="Currency" w="w-[34px]"><svg width="17" height="17"><path d="M0 1h16v9h-16z" fill="#4a72c0" /><circle cx="8" cy="5" r="3" fill="#dfe8fa" /><path d="M10 7h6v9h-6zM3 12h6v3h-6z" fill="#e8b840" stroke="#a07818" /></svg><Down /></Tool>
              <Tool label="Percent" w="w-6">%</Tool>
              <Tool label="Comma"><b className="text-lg leading-3">,</b></Tool>
            </div>
            <div className={`${toolBox} text-[9px] leading-[9px] font-bold`}>
              <Tool label="Increase decimal"><span className="text-right"><span className="text-[#2a5fd0]">←</span>.0<br />.00</span></Tool>
              <Tool label="Decrease decimal"><span className="text-right">.00<br /><span className="text-[#2a5fd0]">→</span>.0</span></Tool>
            </div>
          </div>
        </div>
      </Group>
      <Group title="样式" w="w-[356px]">
        <div className="flex pl-[5px]">
          <div className="pt-[6px]">
            <BigAction lines={["条件格式"]}>
              <path d={grid4} fill="#fff" stroke="#8a9cc0" />
              <path d="M8 1h6v6h-6zM1 13h13v5h-13z" fill="#f0604a" /><path d="M8 7h11v5h-11zM8 19h6v6h-6z" fill="#5a8ae8" />
              <path d="M15.500 15.500h14v12h-14z" fill="#eef2fa" stroke="#556" /><path d="M21 17l-4 2 4 2M17 23h4M24 18l4 2-4 2M23 25h5" stroke="#222" />
            </BigAction>
          </div>
          <div className="pt-[6px] pl-[5px]">
            <BigAction lines={["套用", "表格格式"]} sideArrow>
              <path d={grid4} fill="#fff" stroke="#8a9cc0" />
              <path d="M8 7h13v12h-13z" fill="#8ab0f0" /><path d="M29 7l-11 13" stroke="#b08858" strokeWidth="4" /><path d="M18 17l3 3c-1 6-7 7-11 7 3-2 3-8 8-10z" fill="#3a6ac8" />
            </BigAction>
          </div>
          <div className="mt-1 ml-1 flex rounded-xs border border-[#b9d0ed] text-sm">
            <div className="grid grid-cols-[104px_102px] gap-x-[2px] gap-y-[3px] py-[2px] pr-1 leading-[18px]">
              <button type="button" className="ml-[2px] h-[23px] bg-[#c6efce] pl-1 text-left text-[#006100]">好</button>
              <button type="button" className="ml-[2px] h-[23px] bg-[#ffeb9c] pl-1 text-left text-[#9c6500]">适中</button>
              <button type="button" className="-mt-px h-[27px] border-2 border-[#f0b050] bg-white pl-[3px] text-left text-[#0000ff] underline">超链接</button>
              <button type="button" className="ml-[2px] h-[23px] border border-[#7f7f7f] bg-[#f2f2f2] pl-1 text-left font-bold text-[#fa7d00]">计算</button>
            </div>
            <div className="flex w-[14px] flex-col divide-y divide-[#a9c4e6] border-l border-[#b9d0ed] bg-[#d3e2f4]">
              <button type="button" aria-label="Scroll up" className="flex flex-1 rotate-180 items-center justify-center"><Down /></button>
              <button type="button" aria-label="Scroll down" className="flex flex-1 items-center justify-center"><Down /></button>
              <button type="button" aria-label="More styles" className="flex flex-1 flex-col items-center justify-center gap-[2px]"><span className="w-[6px] border-t border-[#4a6fa8]" /><Down /></button>
            </div>
          </div>
        </div>
      </Group>
      <Group title="单元格" w="w-[134px]">
        <div className="flex gap-3 pt-[6px] pl-[7px]">
          <BigAction lines={["插入"]}>
            <path d="M.5.5h14v5h-14zM7.500.5v5M.5 15.500h14v10h-14zM7.500 15.500v10M.5 20.500h14" fill="#fff" stroke="#667" /><path d="M15.500 7.500h14v6h-14zM22.500 7.500v6" fill="#6a90e8" stroke="#345" /><path d="M14 10.500h-8M9 8l-3 2.500 3 2.500" stroke="#234" />
          </BigAction>
          <BigAction lines={["删除"]}>
            <path d="M3.500.5h14v5h-14zM10.500.5v5M3.500 15.500h14v10h-14zM10.500 15.500v10M3.500 20.500h14" fill="#fff" stroke="#667" /><path d="M8.500 7.500h10v6h-10z" stroke="#36c" strokeDasharray="1 1" /><path d="M16 5l11 10M26 4l-10 12" stroke="#f0503a" strokeWidth="2" />
          </BigAction>
          <BigAction lines={["格式"]}>
            <path d="M1 1.500h26" stroke="#333" strokeDasharray="2 1" /><path d="M1.500 4.500h27v20h-27zM8.500 4.500v20M17.500 4.500v20M24.500 4.500v20M1.500 10.500h27M1.500 19.500h27" fill="#fff" stroke="#8a94b0" /><path d="M9 10h9v9h-9z" fill="#5a8ae8" /><path d="M4 25v3h14v-3" stroke="#889" />
          </BigAction>
        </div>
      </Group>
      <Group title="" w="w-[240px]">
        <div className="flex flex-col pt-1 pl-[6px]">
          <RowAction label="自动求和" arrow><path d="M12 5v-2h-9l4 5-4 5h9v-2" stroke="#000" strokeWidth="2" /></RowAction>
          <RowAction label="填充" arrow><path d="M1.500 1.500h12v13h-12z" fill="#eaf2fc" stroke="#567" /><path d="M2 2h11v2h-11z" fill="#4a72c0" /><path d="M6 5h3v4h3l-4.500 5-4.500-5h3z" fill="#3a6ad0" /></RowAction>
          <RowAction label="清除" arrow><path d="M1 11l7-8c2-1 5 0 5 2l-6 8c-2 1-6 1-6-2z" fill="#fff" stroke="#778" /><path d="M6 14.500h9" stroke="#000" /></RowAction>
        </div>
      </Group>
    </div>
  );
}

const tabs = ["开始", "插入", "页面布局", "公式", "数据", "审阅", "视图", "Acrobat"];

function Logo() {
  const stripes = [
    [50, 14, 47], [46, 17, 50], [44, 20, 52], [42, 24, 51],
    [39, 30, 14], [38, 34, 14], [37, 38, 14], [36, 42, 14],
    [34, 46, 56], [34, 49, 56], [33, 53, 56], [33, 57, 55], [32, 61, 54],
    [32, 65, 10], [31, 69, 10], [31, 73, 9], [30, 77, 9], [29, 81, 9], [28, 85, 9], [27, 89, 9],
  ];
  return (
    <svg className="mx-auto block" width="424" height="108" viewBox="0 0 424 108" role="img" aria-label="兴森快捷 FASTPRINT">
      <path d="M24 3h78l-1 4h-71l-23 84h-7z" />
      <path d="M60 14c30-3 63 3 63 30 0 24-28 33-57 30l-9 28h-35l5-20 9-35c5-22 10-30 24-33z" />
      {stripes.map(([x, y, w]) => <path key={y} d={`M${x} ${y}h${w}l-1 1.500h-${w}z`} fill="#fff" />)}
      <g className="font-['Noto_Sans_CJK_SC',sans-serif]" fontSize="60" fontWeight="700">
        <text x="141" y="58">兴</text>
        <text x="212" y="58">森</text>
        <text x="281" y="58">快</text>
        <text x="352" y="58">捷</text>
      </g>
      <text x="146" y="96" className="font-['Liberation_Serif',serif]" fontSize="48" fontWeight="bold">FASTPRINT</text>
    </svg>
  );
}

const cols: { id: string; w: string }[] = [
  { id: "A", w: "w-[27px]" }, { id: "B", w: "w-[117px]" }, { id: "C", w: "w-[75px]" }, { id: "D", w: "w-[241px]" },
  { id: "E", w: "w-[75px]" }, { id: "F", w: "w-[16px]" }, { id: "G", w: "w-[413px]" }, { id: "H", w: "w-[102px]" },
  { id: "I", w: "w-[128px]" }, { id: "J", w: "w-[126px]" },
];

function RowHead({ n, active }: { n: number; active?: boolean }) {
  return (
    <th className={`border-r border-b p-0 text-center align-bottom text-xs leading-[14px] font-normal text-[#27413e] ${MONO} ${active ? "border-[#f29536] bg-[#ffd58d]" : "border-[#9eb6ce] bg-[#e4ecf7]"}`}>
      {n}
    </th>
  );
}

const cell = "border-r border-b border-black p-0";
const frozen = "border-r border-b border-r-[#6e6e6e] border-b-black p-0";

function InfoRow({ n, h, label, value, tone, children }: { n: number; h: string; label: string; value: ReactNode; tone: string; children?: ReactNode }) {
  return (
    <tr className={h}>
      <RowHead n={n} />
      <td colSpan={2} className={`${frozen} bg-white`}><b className="pl-[2px]">{label}</b></td>
      <td colSpan={2} className={`${cell} ${tone}`}><div className="pl-[2px]">{value}</div></td>
      {children}
    </tr>
  );
}

const questions = [
  {
    no: 1, date: "6/Jan/2021", kind: "other",
    problem: ["确认一答复缩小孔径, 但缩小过孔孔径后会满", "足高密度要求, 则外层需要多补偿. 外层间距", "不足无法满足, 请确认是否允许按常规评审处", "理."],
    options: ["缩小过孔至0.2mm,再不满足三级标准的过孔焊环接受不足.", "请指示.", ""],
    choice: "A", comment: "按常规评审处理",
  },
  { no: 2, date: "", kind: "", problem: [], options: ["", "", ""], choice: "", comment: "" },
  { no: 3, date: "", kind: "", problem: [], options: ["", "", ""], choice: "", comment: "" },
];

function Sheet() {
  return (
    <div className="min-h-0 flex-1 overflow-hidden bg-white">
      <table className={`w-[1348px] table-fixed border-separate border-spacing-0 text-xs leading-[15px] text-black ${SHEET}`}>
        <thead>
          <tr className={`h-[17px] text-[13px] leading-4 text-[#27413e] ${MONO}`}>
            <th className="w-7 border-r border-b border-[#9eb6ce] bg-[#a9c4e9] p-0">
              <svg width="9" height="9" className="mr-1 ml-auto block"><path d="M9 0v9h-9z" fill="#e4ecf7" /></svg>
            </th>
            {cols.map(c => (
              <th key={c.id} className={`border-r border-b p-0 font-normal ${c.w} ${c.id === "G" ? "border-[#f29536] bg-linear-to-b from-[#f9d99f] to-[#f1c15f]" : "border-[#9eb6ce] bg-linear-to-b from-[#f6fafb] to-[#d5ddea]"}`}>{c.id}</th>
            ))}
          </tr>
        </thead>
        <tbody>
          <InfoRow n={1} h="h-[22px]" label="Customer P/N:" value="RK538361_0" tone="bg-[#ccffcc]">
            <td colSpan={3} rowSpan={6} className={cell}><Logo /></td>
            <td colSpan={3} className={`${cell} text-sm leading-4 font-bold text-[#ff0000]`}><div className="pl-[257px]">Please</div></td>
          </InfoRow>
          <InfoRow n={2} h="h-5" label="FP P/N:" value="CV32W016A0" tone="bg-[#ccffcc]">
            <td className={`${cell} text-center text-sm leading-4 font-bold`}>score</td>
            <td className={`${cell} text-center text-sm leading-4`}>5</td>
            <td className={`${cell} text-center text-sm leading-4`}>4</td>
          </InfoRow>
          <InfoRow n={3} h="h-5" label="Made by:" value="周磊" tone="bg-[#ccffff]">
            <td rowSpan={2} className={`${cell} text-center text-sm leading-[18px] font-bold`}>standard<br />/evaluation</td>
            {["very good", "good"].map((name, i) => (
              <td key={name} rowSpan={2} className={cell}>
                <label className={`flex items-center gap-1 font-['Lato',sans-serif] text-lg leading-6 ${i ? "pl-7" : "pl-[10px]"}`}>
                  <input type="radio" name="rating" className="size-[9px] appearance-none rounded-full border border-[#777] border-r-transparent border-b-transparent" />
                  {name}
                </label>
              </td>
            ))}
          </InfoRow>
          <InfoRow n={4} h="h-[22px]" label="Checked by:" value="" tone="bg-[#ccffff]" />
          <InfoRow n={5} h="h-[25px]" label="Date:" value={<span className="text-sm leading-4">2021-01-06 08:05:00</span>} tone="bg-[#ccffff]">
            <td className={`${cell} text-sm font-bold`}><div className="pl-[3px]">suggestion：</div></td>
            <td colSpan={2} className={cell} />
          </InfoRow>
          <InfoRow n={6} h="h-[26px]" label="" value={<span className="pl-[3px] whitespace-pre text-[#0000ff]">NOTE: Customer's  answer in column yellow area</span>} tone="bg-white">
            <td colSpan={3} className={`${cell} font-bold whitespace-nowrap text-[#ff0000]`}>
              <div className="w-[355px] overflow-hidden pl-[2px]">You advices would be the greatest power for us to improve</div>
            </td>
          </InfoRow>
          <tr className="h-[31px]">
            <RowHead n={7} />
            <td colSpan={2} className={frozen} />
            <td colSpan={5} className={cell} />
            <td colSpan={3} className={cell}>
              <div className="h-[30px] w-[355px] overflow-hidden pl-[2px] leading-4 whitespace-nowrap">
                Warm prompt：From the following three aspects：①Supply<br />③Engineering service attitude and service quality
              </div>
            </td>
          </tr>
          <tr className="h-[30px]">
            <RowHead n={8} />
            <td colSpan={2} className={`${frozen} p-0`}>
              <button type="button" className="block h-[29px] w-full border-r-2 border-b-2 border-[#9a9a9a] bg-[#efefef]">输出确认单</button>
            </td>
            <td colSpan={6} className={`${cell} text-center text-sm leading-4 font-bold`}><div className="pr-36">EQs from FastPrint</div></td>
            <td colSpan={2} className={cell} />
          </tr>
          <tr className="h-[60px] bg-[#ccffcc] text-center font-bold [&>td]:border-b-[#6e6e6e]">
            <RowHead n={9} />
            <td className={`${cell} font-normal`}>*</td>
            <td className={frozen}>DD-MM-YYYY</td>
            <td className={cell}>Types of<br />Problems</td>
            <td className={cell}>Problem Description</td>
            <td className={cell}>Attachment</td>
            <td colSpan={2} className={cell}>Recommendation /suggestion</td>
            <td className={cell}>Attachments</td>
            <td className={cell}>Pls choose one<br />option</td>
            <td className={cell}>Comments</td>
          </tr>
          {questions.map((q, qi) => (
            <Fragment key={q.no}>
              {q.options.map((text, i) => (
                <tr key={i} className="h-9 bg-[#ccffff]">
                  <RowHead n={10 + qi * 3 + i} active={qi === 0 && i === 0} />
                  {i === 0 && (
                    <>
                      <td rowSpan={3} className={`${cell} bg-[#ccffcc] text-center text-sm font-bold`}>{q.no}</td>
                      <td rowSpan={3} className={`${frozen} text-center`}>{q.date}</td>
                      <td rowSpan={3} className={`${cell} text-center text-sm`}>{q.kind}</td>
                      <td rowSpan={3} className={cell}>
                        {q.problem.map(line => <p key={line} className="pl-[2px] whitespace-nowrap">{line}</p>)}
                      </td>
                    </>
                  )}
                  <td className={cell} />
                  <td className={`${cell} text-center`}>{"ABC"[i]}</td>
                  <td className={`${cell} relative`}>
                    <div className="pl-[2px]">{text}</div>
                    {qi === 0 && i === 0 && (
                      <>
                        <span className="absolute -inset-px border-2 border-[#35030f]" />
                        <span className="absolute -right-[3px] -bottom-[3px] size-[5px] border border-white bg-[#35030f]" />
                      </>
                    )}
                  </td>
                  <td className={cell} />
                  {i === 0 && (
                    <>
                      <td rowSpan={3} className={`${cell} bg-[#ffff99]`}><div className="pl-[2px]">{q.choice}</div></td>
                      <td rowSpan={3} className={`${cell} bg-[#ffff99]`}><div className="pl-[2px]">{q.comment}</div></td>
                    </>
                  )}
                </tr>
              ))}
            </Fragment>
          ))}
        </tbody>
      </table>
    </div>
  );
}

function ExcelWindow() {
  return (
    <section className={`absolute top-[203px] right-0 bottom-0 left-[615px] flex flex-col rounded-tl-lg border-t border-l border-[#d8dce0] pl-[5px] text-xs backdrop-blur-[5px] ${CJK}`}>
      <div className="absolute inset-y-0 left-0 w-[5px] rounded-tl-lg border-r border-black bg-linear-to-b from-[#6c6f74] via-[#12161e] via-35% to-[#12161e]" />
      <header className="-ml-[5px] flex h-[26px] items-center rounded-tl-lg bg-linear-to-r from-[#6c6f74] via-[#3278a0]/25 via-8% to-[#3250a0]/20 pl-[49px]">
        <div className="flex h-[21px] w-[98px] items-center gap-[9px] rounded-r-full border border-[#4f8a94] pl-2">
          <svg width="14" height="14" aria-label="Save" role="img"><path d="M.5.5h13v13h-13z" fill="#4a50c0" stroke="#2a2f80" /><path d="M3 1h8v6h-8z" fill="#fff" /><path d="M4 9h7v5h-7z" fill="#223" /><path d="M5 10h2v3h-2z" fill="#fff" /></svg>
          <svg width="11" height="13" fill="none" aria-label="Undo" role="img"><path d="M2 5c4-4 8-1 7 3-1 2-2 3-4 4" stroke="#2a5fc0" strokeWidth="2" /><path d="M0 1v7h6z" fill="#2a5fc0" /></svg>
          <span className="-ml-1"><Down /></span>
          <svg width="11" height="13" fill="none" aria-label="Redo" role="img"><path d="M9 5c-4-4-8-1-7 3 1 2 2 3 4 4" stroke="#8fb0c8" strokeWidth="2" /><path d="M11 1v7h-6z" fill="#8fb0c8" /></svg>
          <span className="-ml-1 opacity-50"><Down /></span>
        </div>
        <svg width="7" height="8" className="ml-2"><path d="M0 .5h6" stroke="#123a6a" /><path d="M0 3h6l-3 4z" fill="#123a6a" /></svg>
        <h1 className="ml-[366px] text-xs whitespace-pre text-black [text-shadow:0_0_4px_#fff,0_0_8px_#fff,0_0_10px_#fff]">Q2CV32W016A0(lrc)2021-01-13.xls  [兼容模式] - Microsoft Excel</h1>
      </header>
      <button type="button" aria-label="Office" className="absolute top-1 left-[9px] z-10 flex size-[37px] items-center justify-center rounded-full border border-[#777] bg-radial-[at_50%_30%] from-white via-[#e6e2d8] to-[#b8ae98]">
        <svg width="24" height="24" fill="none" strokeWidth="3">
          <path d="M11 3h-8v8h3" stroke="#d8401a" /><path d="M7 8h5v-5" stroke="#e8701a" />
          <path d="M14 6h6v6h-5z" stroke="#3a8ac8" strokeWidth="2" />
          <path d="M4 13h7v8h-7z" stroke="#f8b01a" /><path d="M14 14h7v7h-7" stroke="#5aa830" />
        </svg>
      </button>
      <div className="flex min-h-0 flex-1 flex-col border-t border-l border-[#101820] bg-[#bfdbff]">
        <nav className="flex h-[26px] shrink-0 items-end pl-12 text-[#15428b]">
          {tabs.map((tab, i) => (
            <button key={tab} type="button" className={`h-[25px] text-xs ${i === 0 ? "mr-[2px] rounded-t-sm border border-b-0 border-[#8db2e3] bg-[#ecf4fc] px-[11px]" : "px-[14px]"}`}>
              {tab}
            </button>
          ))}
        </nav>
        <Ribbon />
        <div className="mt-[6px] ml-[2px] flex h-[33px] shrink-0 items-center border border-[#9cbadb] bg-linear-to-b from-white to-[#e4f1fd] pl-1 text-[#15428b]">
          <svg width="14" height="16"><path d="M7 .5c2 2 4 2 6 2 0 6 0 10-6 13-6-3-6-7-6-13 2 0 4 0 6-2z" fill="#f8941a" stroke="#8a8a90" /><path d="M7 2v6h-5v-4c2 0 4-1 5-2z" fill="#ffe070" /><path d="M7 8h5c0 3-2 5-5 6z" fill="#d8600a" /></svg>
          <b className="ml-[10px]">安全警告</b>
          <span className="ml-3">部分活动内容已被禁用。</span>
          <button type="button" className="ml-[11px] h-[21px] w-[70px] border border-[#9cbadb] bg-white">选项...</button>
        </div>
        <div className="mt-[5px] flex h-5 shrink-0 items-stretch border-y border-[#6d94c4] bg-white text-black">
          <div className="flex w-[160px] items-center">
            <input aria-label="Name box" defaultValue="G10" className={`w-[138px] text-center text-[13px] outline-none ${MONO}`} />
            <svg width="8" height="5" className="ml-2"><path d="M0 0h8l-4 4z" fill="#000" /></svg>
          </div>
          <div className="flex w-[75px] items-center justify-between rounded-l-full border-r border-l border-[#6d94c4] bg-linear-to-b from-[#dfeafa] to-[#b4c9e8] pr-[5px] pl-1">
            <span className="size-[9px] rounded-full bg-[#a5b4cc]" />
            <button type="button" className={`text-sm leading-4 font-bold text-[#444] italic ${SERIF}`}>fx</button>
          </div>
          <p className="flex items-center pl-3 font-['Noto_Sans_CJK_SC',sans-serif] text-[15px] leading-[18px] whitespace-nowrap">
            缩小过孔至<span className={`text-[13px] ${MONO}`}>0.2mm,</span>再不满足三级标准的过孔焊环接受不足.
          </p>
        </div>
        <div className="h-1 shrink-0 border-b border-[#6d94c4]" />
        <Sheet />
      </div>
    </section>
  );
}

export default function App() {
  return (
    <main className="relative flex h-screen w-full overflow-hidden bg-black text-black">
      <div className="w-[6px] shrink-0 border-x border-[#1f4f78] bg-linear-to-b from-[#8fb4d8] via-[#a8d0f0] via-40% to-[#2cb0fa]" />
      <div className="flex min-w-0 flex-1 flex-col border-l-2 border-[#3a5a60]">
        <GenesisMenu />
        <div className="flex min-h-0 flex-1">
          <LayerPanel />
          <div className="min-w-0 flex-1"><BoardView /></div>
          <ViewTools />
        </div>
        <CommandBar />
      </div>
      <DrillWindow />
      <ExcelWindow />
    </main>
  );
}
